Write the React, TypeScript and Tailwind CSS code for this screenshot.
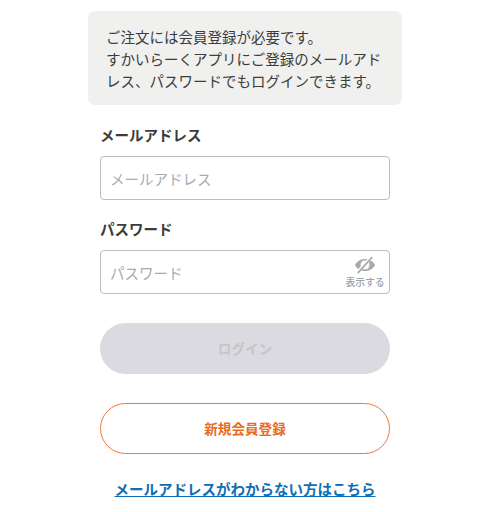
import React, { useState } from 'react';

const HiddenEyeIcon = () => {
  return (
    <svg viewBox="0 0 22 18" className="h-[18px] w-[22px]" fill="none">
      <path
        fillRule="evenodd"
        d="M1 9C3 5 7 3 11 3s8 2 10 6c-2 4-6 6-10 6S3 13 1 9Zm5.5 0a4.5 4.5 0 0 0 9 0a4.5 4.5 0 0 0-9 0Z"
        fill="#a9a9ab"
      />
      <path d="M3.6 16.4 17.4 1.4" stroke="#fff" strokeWidth="3.6" />
      <path d="M4.2 16.6 17.8 1.6" stroke="#a9a9ab" strokeWidth="1.7" strokeLinecap="round" />
    </svg>
  );
};

const inputClass =
  'h-11 w-full rounded-[4px] border border-[#bdbdbf] bg-white px-[9px] text-[14.5px] text-[#333] placeholder:text-[#a9a9b3] placeholder:opacity-100 outline-none';

const App = () => {
  const [visible, setVisible] = useState(false);

  return (
    <div className="h-[512px] overflow-hidden bg-white pt-[11px] font-['Noto_Sans_CJK_JP',sans-serif] text-[14.5px] leading-[21.8px] text-[#3c3c3c]">
      <div className="ml-[88px] w-[314px]">
        <p className="h-[94px] rounded-[7px] bg-[#f0f0ee] pt-[15px] pl-[18px] whitespace-nowrap">
          ご注文には会員登録が必要です。
          <br />
          すかいらーくアプリにご登録のメールアド
          <br />
          レス、パスワードでもログインできます。
        </p>

        <form className="px-3 pt-[19px]" onSubmit={(e) => e.preventDefault()}>
          <label htmlFor="email" className="block h-8 font-bold">メールアドレス</label>
          <input id="email" type="email" placeholder="メールアドレス" className={inputClass} />

          <label htmlFor="password" className="mt-[18px] block h-8 font-bold">パスワード</label>
          <div className="relative">
            <input
              id="password"
              type={visible ? 'text' : 'password'}
              placeholder="パスワード"
              className={inputClass}
            />
            <button
              type="button"
              onClick={() => setVisible(!visible)}
              className="absolute top-[6px] right-[5px] flex w-10 flex-col items-center text-[9.8px] leading-[16px] font-medium whitespace-nowrap text-[#a0a0ac]"
            >
              <HiddenEyeIcon />
              表示する
            </button>
          </div>

          <button
            type="submit"
            disabled
            className="mt-[29px] block h-[51px] w-full rounded-full bg-[#dbdae0] text-[13.6px] font-bold text-[#c5c5c6]"
          >
            ログイン
          </button>
          <button
            type="button"
            className="mt-[29px] block h-[51px] w-full rounded-full border border-[#ed7a35] bg-white text-[13.6px] font-bold text-[#ea6a1e]"
          >
            新規会員登録
          </button>
        </form>

        <a href="#" className="mt-[24px] block text-center font-bold whitespace-nowrap text-[#0f6eb4] underline">
          メールアドレスがわからない方はこちら
        </a>
      </div>
    </div>
  );
};

export default App;
